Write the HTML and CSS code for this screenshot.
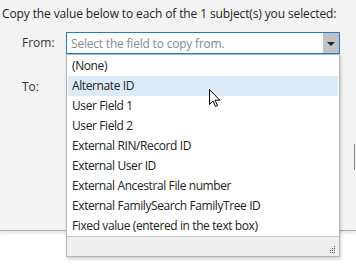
FILE: index.html
```html
<!DOCTYPE html>
<html lang="en">
<head>
    <meta charset="UTF-8">
    <title>Copy Field Value</title>
    <link rel="stylesheet" href="styles.css">
</head>
<body>

    <!-- Dialog -->
    <div class="dialog">
        <p class="title">Copy the value below to each of the 1 subject(s) you selected:</p>

        <div class="form">
            <label class="label">From:</label>
            <div class="combo">
                <div class="combo-box">
                    <span class="placeholder">Select the field to copy from.</span>
                    <span class="combo-btn"><span class="arrow"></span></span>
                </div>

                <!-- Open dropdown list -->
                <div class="dropdown">
                    <ul class="options">
                        <li>(None)</li>
                        <li class="hover">Alternate ID</li>
                        <li>User Field 1</li>
                        <li>User Field 2</li>
                        <li>External RIN/Record ID</li>
                        <li>External User ID</li>
                        <li>External Ancestral File number</li>
                        <li>External FamilySearch FamilyTree ID</li>
                        <li>Fixed value (entered in the text box)</li>
                    </ul>
                    <div class="grip-bar">
                        <svg class="grip" width="7" height="7" viewBox="0 0 7 7">
                            <rect x="5" y="0" width="1" height="1"/>
                            <rect x="3" y="2" width="1" height="1"/>
                            <rect x="5" y="2" width="1" height="1"/>
                            <rect x="1" y="4" width="1" height="1"/>
                            <rect x="3" y="4" width="1" height="1"/>
                            <rect x="5" y="4" width="1" height="1"/>
                            <rect x="1" y="6" width="1" height="1"/>
                            <rect x="3" y="6" width="1" height="1"/>
                            <rect x="5" y="6" width="1" height="1"/>
                        </svg>
                    </div>
                </div>
            </div>

            <label class="label">To:</label>
            <div class="combo-empty"></div>
        </div>

        <span class="edge"></span>
    </div>

    <!-- Mouse pointer -->
    <svg class="cursor" width="12" height="19" viewBox="0 0 12 19">
        <path d="M0.5 0.5 L0.5 15.5 L4 12 L6.5 17.5 L8.5 16.6 L6 11.2 L10.8 11.2 Z" fill="#fff" stroke="#000" stroke-width="1"/>
    </svg>

</body>
</html>
```

FILE: styles.css
```css
/* Basic Styles */
body {
    font-family: "Open Sans", "Noto Sans", sans-serif;
    font-size: 12px;
    margin: 0;
    padding: 0;
    background-color: #fff;
    color: #1e1e1e;
    width: 356px;
    height: 264px;
    overflow: hidden;
    position: relative;
}

/* Dialog */
.dialog {
    background-color: #f3f3f3;
    height: 230px;
    border-bottom: 1px solid #a9a9a9;
    box-shadow: 0 2px 4px rgba(0, 0, 0, 0.12);
    position: relative;
}

.title {
    margin: 0;
    padding: 6px 0 0 2px;
    line-height: 16px;
    letter-spacing: -0.12px;
}

/* Form */
.form {
    display: grid;
    grid-template-columns: 66px 274px;
    grid-template-rows: 22px 22px;
    row-gap: 22px;
    margin-top: 10px;
}

.label {
    padding-left: 22px;
    line-height: 22px;
    color: #333;
}

/* Combobox */
.combo {
    position: relative;
}

.combo-box {
    height: 20px;
    border: 1px solid #1e7bd0;
    background-color: #fff;
    display: flex;
    align-items: center;
}

.placeholder {
    flex: 1;
    padding-left: 4px;
    color: #8a8a8a;
    letter-spacing: -0.2px;
}

.combo-btn {
    width: 16px;
    height: 20px;
    background-color: #c2c2c2;
    display: flex;
    align-items: center;
    justify-content: center;
}

.arrow {
    width: 0;
    height: 0;
    border-left: 4px solid transparent;
    border-right: 4px solid transparent;
    border-top: 4px solid #222;
    margin-top: 1px;
}

/* Dropdown list */
.dropdown {
    position: absolute;
    top: 22px;
    left: 0;
    width: 272px;
    border: 1px solid #b5b5b5;
    background-color: #fff;
    box-shadow: 1px 2px 3px rgba(0, 0, 0, 0.2);
    z-index: 2;
}

.options {
    list-style: none;
    margin: 0;
    padding: 1px 1px 0 1px;
}

.options li {
    height: 20px;
    line-height: 20px;
    padding-left: 4px;
    letter-spacing: -0.4px;
    color: #222;
}

.options li.hover {
    background-color: #dcebf8;
}

.grip-bar {
    height: 20px;
    border-top: 1px solid #c8c8c8;
    background-color: #efefef;
    display: flex;
    justify-content: flex-end;
    align-items: flex-end;
    padding: 0 3px 3px 0;
    box-sizing: border-box;
}

.grip {
    fill: #555;
}

/* Edge of another control on the right */
.edge {
    position: absolute;
    left: 354px;
    top: 144px;
    width: 1px;
    height: 26px;
    background-color: #8a8a8a;
}

/* Mouse pointer */
.cursor {
    position: absolute;
    left: 209px;
    top: 89px;
    z-index: 3;
}
```
